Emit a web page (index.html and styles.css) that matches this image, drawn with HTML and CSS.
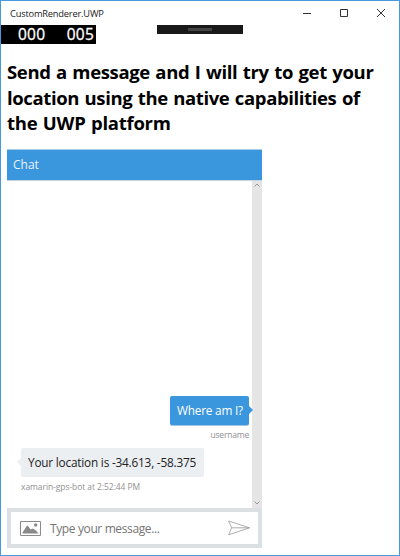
FILE: index.html
```html
<!DOCTYPE html>
<html lang="en">
<head>
<meta charset="utf-8">
<title>CustomRenderer.UWP</title>
<link rel="stylesheet" href="styles.css">
</head>
<body>
<div class="window">
  <header class="titlebar">
    <span class="title">CustomRenderer.UWP</span>
    <div class="controls">
      <svg viewBox="0 0 10 10"><path d="M1 5.5h8"/></svg>
      <svg viewBox="0 0 10 10"><path d="M1.5 1.5h7v7h-7z"/></svg>
      <svg viewBox="0 0 10 10"><path d="M1 1l8 8M9 1l-8 8"/></svg>
    </div>
  </header>
  <div class="debug">
    <div class="counters"><span>000</span><span>005</span></div>
    <div class="toolbar"><i></i></div>
  </div>
  <main>
    <h1><span class="l1">Send a message and I will try to get your</span><br><span class="l2">location using the native capabilities of</span><br><span class="l3">the UWP platform</span></h1>
    <section class="chat">
      <div class="chat-header"><span>Chat</span></div>
      <div class="chat-body">
        <div class="messages">
          <div class="message mine">
            <div class="bubble"><span>Where am I?</span></div>
            <div class="meta"><span>username</span></div>
          </div>
          <div class="message bot">
            <div class="bubble"><span>Your location is -34.613, -58.375</span></div>
            <div class="meta"><span>xamarin-gps-bot at 2:52:44 PM</span></div>
          </div>
        </div>
        <div class="scrollbar">
          <svg viewBox="0 0 6 4"><path d="M.5 3.5L3 1l2.5 2.5"/></svg>
          <svg viewBox="0 0 6 4"><path d="M.5 .5L3 3L5.5 .5"/></svg>
        </div>
      </div>
      <div class="composer">
        <svg class="picture" viewBox="0 0 21 15"><path class="frame" d="M.5 .5h20v14H.5z"/><path class="hill" d="M2.500 12.500V11.500L4.500 8.500L7 4.500L8.500 5.500L10.500 8.500L13 7.500L16.500 10L18.500 12.500z"/><circle class="hill" cx="15.700" cy="4" r="1.700"/></svg>
        <span class="placeholder">Type your message...</span>
        <svg class="send" viewBox="0 0 22 16"><path d="M.7 1L21.500 7.800L.7 14.800L3.600 7.800zM3.600 7.800H21.500"/></svg>
      </div>
    </section>
  </main>
</div>
</body>
</html>
```
FILE: styles.css
```css
* { box-sizing: border-box; }
body { margin: 0; background: #fff; font-family: "Open Sans", "Noto Sans", sans-serif; color: #000; }
svg { display: block; fill: none; flex: none; }
span { white-space: nowrap; }
.window { width: 400px; height: 556px; border: 1px solid #4699df; overflow: hidden; }
.titlebar { height: 24px; display: flex; justify-content: space-between; align-items: center; padding: 0 13px 0 9px; }
.title { font-size: 9.3px; letter-spacing: -.2px; color: #222; }
.controls { display: flex; gap: 27px; }
.controls svg { width: 10px; height: 10px; stroke: #333; stroke-width: 1; }
.debug { height: 19px; display: flex; }
.counters { width: 95px; height: 19px; padding: 0 2px 0 17px; background: #000; color: #fff; display: flex; justify-content: space-between; font-size: 15.5px; line-height: 19px; letter-spacing: .2px; -webkit-text-stroke: .3px #fff; }
.toolbar { width: 86px; height: 9px; margin-left: 61px; background: #191919; display: flex; align-items: center; justify-content: center; }
.toolbar i { width: 24px; height: 3px; background: #444; }
main { padding: 15px 0 0 6px; }
h1 { margin: 0; font-size: 18.5px; line-height: 25.5px; font-weight: 700; height: 90px; word-spacing: 1px; }
.l1 { letter-spacing: -.35px; }
.l2 { letter-spacing: -.37px; }
.l3 { letter-spacing: -.27px; }
.chat { width: 255px; height: 399px; display: flex; flex-direction: column; }
.chat-header { height: 32px; background: #3a96dd; border-top: 1px solid #a9cbe6; border-bottom: 1px solid #c5d5e2; color: #e9f3fb; padding-left: 6px; font-size: 12px; line-height: 29px; }
.chat-body { height: 327px; display: flex; }
.messages { flex: 1; padding: 215px 3px 0 14px; }
.message { display: flex; flex-direction: column; align-items: flex-start; }
.mine { align-items: flex-end; }
.bubble { position: relative; height: 29px; padding: 0 7px; border-radius: 2px; font-size: 11.8px; line-height: 29px; letter-spacing: -.2px; }
.bubble::after { content: ""; position: absolute; top: 10px; border: 4px solid transparent; }
.mine .bubble { width: 79px; background: #3a96dd; color: #fff; box-shadow: 0 1px 0 #a3c5e0; }
.mine .bubble::after { left: 79px; border-left-color: #3a96dd; border-right-width: 0; }
.bot .bubble { width: 183px; background: #eceff2; color: #222; }
.bot .bubble::after { right: 183px; border-right-color: #eceff2; border-left-width: 0; }
.meta { height: 23px; line-height: 20px; font-size: 8.5px; letter-spacing: -.07px; color: #929292; }
.mine .meta { letter-spacing: -.2px; }
.scrollbar { width: 10px; background: #e5e5e5; display: flex; flex-direction: column; justify-content: space-between; align-items: center; padding: 2px 0 3px; }
.scrollbar svg { width: 6px; height: 4px; stroke: #999; stroke-width: 1; }
.composer { height: 40px; border: 4px solid #dbe0e3; background: #fff; display: flex; align-items: center; padding: 0 8px 0 9px; }
.picture { width: 21px; height: 15px; }
.frame { stroke: #8b8b8b; }
.hill { fill: #8a8a8a; }
.placeholder { flex: 1; margin-left: 9px; font-size: 12px; letter-spacing: -.38px; color: #757575; }
.send { width: 22px; height: 16px; stroke: #999; stroke-width: .8; }
```
